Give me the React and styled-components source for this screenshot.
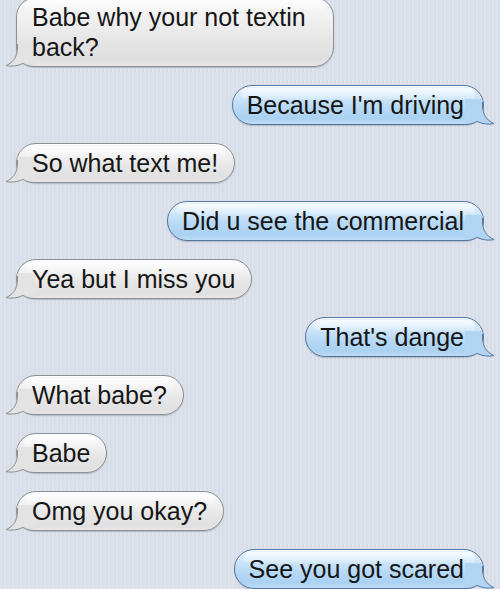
import React from "react";
import styled, { createGlobalStyle } from "styled-components";

const GlobalStyle = createGlobalStyle`
  html, body {
    margin: 0;
    padding: 0;
    overflow: hidden;
  }
  body {
    font-family: "Liberation Sans", Arial, Helvetica, sans-serif;
  }
`;

const Screen = styled.div`
  width: 500px;
  height: 589px;
  overflow: hidden;
  background-color: #dae0ea;
  background-image: repeating-linear-gradient(
    90deg,
    rgba(255, 255, 255, 0.08) 0px,
    rgba(255, 255, 255, 0.08) 2px,
    rgba(150, 165, 190, 0.03) 2px,
    rgba(150, 165, 190, 0.03) 4px
  );
`;

const Thread = styled.div`
  display: flex;
  flex-direction: column;
  gap: 18px;
  margin-top: -3px;
`;

const Row = styled.div`
  display: flex;
  justify-content: ${(p) => (p.$me ? "flex-end" : "flex-start")};
  padding: ${(p) => (p.$me ? "0 16px 0 0" : "0 0 0 16px")};
`;

const palette = {
  gray: {
    border: "#8d8f93",
    bg: "linear-gradient(180deg, #f8f8f8 0%, #efefef 35%, #e6e6e6 60%, #e0e0e0 90%, #e6e6e6 100%)",
    tail: "#e3e3e3",
  },
  blue: {
    border: "#56759c",
    bg: "linear-gradient(180deg, #e2f1fd 0%, #cfe6fa 30%, #b8daf6 55%, #aad1f2 85%, #bcdcf7 100%)",
    tail: "#b2d5f4",
  },
};

const Bubble = styled.div`
  position: relative;
  box-sizing: border-box;
  max-width: ${(p) => (p.$me ? "none" : "318px")};
  min-height: 40px;
  padding: ${(p) => (p.$me ? "4px 19px 4px 14px" : "4px 16px 4px 15px")};
  font-size: 25px;
  line-height: 30px;
  color: #161616;
  background: ${(p) => palette[p.$me ? "blue" : "gray"].bg};
  border: 1px solid ${(p) => palette[p.$me ? "blue" : "gray"].border};
  border-radius: 20px;
  box-shadow: 0 1px 1px rgba(60, 70, 90, 0.25),
    inset 0 1px 0 rgba(255, 255, 255, 0.7);

  &::before {
    content: "";
    position: absolute;
    left: 8px;
    right: 8px;
    top: 2px;
    height: 11px;
    border-radius: 12px 12px 8px 8px;
    background: linear-gradient(
      180deg,
      rgba(255, 255, 255, 0.75),
      rgba(255, 255, 255, 0.1)
    );
    pointer-events: none;
  }
`;

const Text = styled.span`
  position: relative;
  z-index: 2;
`;

const TailSvg = styled.svg`
  position: absolute;
  bottom: -1px;
  width: 31px;
  height: 26px;
  overflow: visible;
  z-index: 1;
  ${(p) => (p.$me ? "right: -13px; transform: scaleX(-1);" : "left: -13px;")}
`;

function Tail({ me }) {
  const c = palette[me ? "blue" : "gray"];
  return (
    <TailSvg $me={me} viewBox="0 0 31 26">
      <path
        d="M13.6 0 L13.5 6 C13.5 15 10 21 2 24.6 C7 25.8 14 25 19 22.4 C23 25 27 25.5 31 25.5 L31 0 Z"
        fill={c.tail}
      />
      <path
        d="M13.5 3 L13.5 6 C13.5 15 10 21 2 24.6 C7 25.8 14 25 19 22.4 C23 25 27 25.5 31 25.5"
        fill="none"
        stroke={c.border}
        strokeWidth="1"
      />
    </TailSvg>
  );
}

const messages = [
  { me: false, text: "Babe why your not textin back?" },
  { me: true, text: "Because I'm driving" },
  { me: false, text: "So what text me!" },
  { me: true, text: "Did u see the commercial" },
  { me: false, text: "Yea but I miss you" },
  { me: true, text: "That's dange" },
  { me: false, text: "What babe?" },
  { me: false, text: "Babe" },
  { me: false, text: "Omg you okay?" },
  { me: true, text: "See you got scared" },
];

export default function App() {
  return (
    <Screen>
      <GlobalStyle />
      <Thread>
        {messages.map((m, i) => (
          <Row key={i} $me={m.me}>
            <Bubble $me={m.me}>
              <Tail me={m.me} />
              <Text>{m.text}</Text>
            </Bubble>
          </Row>
        ))}
      </Thread>
    </Screen>
  );
}
